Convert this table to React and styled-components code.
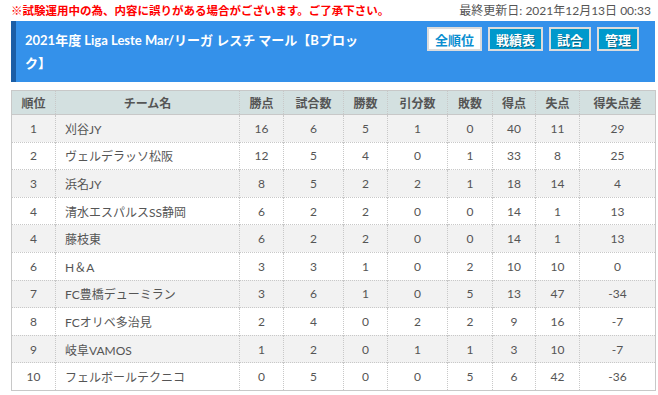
import styled, { createGlobalStyle } from "styled-components";

const GlobalStyle = createGlobalStyle`
  body {
    margin: 0;
    background: #fff;
    font-family: Lato, "Noto Sans CJK JP", sans-serif;
  }
`;

const columns = [
  { label: "順位", width: 44 },
  { label: "チーム名", width: 184 },
  { label: "勝点", width: 44 },
  { label: "試合数", width: 60 },
  { label: "勝数", width: 44 },
  { label: "引分数", width: 60 },
  { label: "敗数", width: 45 },
  { label: "得点", width: 43 },
  { label: "失点", width: 44 },
  { label: "得失点差", width: 76 },
];

const rows = [
  [1, "刈谷JY", 16, 6, 5, 1, 0, 40, 11, 29],
  [2, "ヴェルデラッソ松阪", 12, 5, 4, 0, 1, 33, 8, 25],
  [3, "浜名JY", 8, 5, 2, 2, 1, 18, 14, 4],
  [4, "清水エスパルスSS静岡", 6, 2, 2, 0, 0, 14, 1, 13],
  [4, "藤枝東", 6, 2, 2, 0, 0, 14, 1, 13],
  [6, "H＆A", 3, 3, 1, 0, 2, 10, 10, 0],
  [7, "FC豊橋デューミラン", 3, 6, 1, 0, 5, 13, 47, -34],
  [8, "FCオリベ多治見", 2, 4, 0, 2, 2, 9, 16, -7],
  [9, "岐阜VAMOS", 1, 2, 0, 1, 1, 3, 10, -7],
  [10, "フェルボールテクニコ", 0, 5, 0, 0, 5, 6, 42, -36],
];

const navButtons = [
  { label: "全順位", active: true },
  { label: "戦績表" },
  { label: "試合" },
  { label: "管理" },
];

const App = () => {
  return (
    <>
      <GlobalStyle />
      <S.Page>
        <S.TopLine>
          <S.Notice>※試験運用中の為、内容に誤りがある場合がございます。ご了承下さい。</S.Notice>
          <S.Updated>最終更新日: 2021年12月13日 00:33</S.Updated>
        </S.TopLine>

        <S.Banner>
          <S.Title>2021年度 Liga Leste Mar/リーガ レスチ マール【Bブロック】</S.Title>
          <S.Nav>
            {navButtons.map((b) => (
              <S.NavButton key={b.label} $active={b.active}>
                {b.label}
              </S.NavButton>
            ))}
          </S.Nav>
        </S.Banner>

        <S.Table>
          <colgroup>
            {columns.map((c) => (
              <col key={c.label} style={{ width: c.width }} />
            ))}
          </colgroup>
          <thead>
            <tr>
              {columns.map((c) => (
                <S.Th key={c.label}>{c.label}</S.Th>
              ))}
            </tr>
          </thead>
          <tbody>
            {rows.map((r, i) => (
              <S.Row key={i} $odd={i % 2 === 0}>
                {r.map((v, j) => (
                  <S.Td key={j} $name={j === 1}>
                    {v}
                  </S.Td>
                ))}
              </S.Row>
            ))}
          </tbody>
        </S.Table>
      </S.Page>
    </>
  );
};

export default App;

const S = {
  Page: styled.div`
    padding: 0 3px 0 11px;
    width: 658px;
    box-sizing: border-box;
  `,

  TopLine: styled.div`
    display: flex;
    justify-content: space-between;
    align-items: center;
    height: 21px;
    padding: 0 4px 2px 0;
    box-sizing: border-box;
    font-size: 12px;
  `,

  Notice: styled.div`
    color: #f00;
    font-weight: bold;
    font-family: "Noto Sans CJK JP", sans-serif;
    font-size: 11.5px;
  `,

  Updated: styled.div`
    color: #555;
    font-size: 12px;
  `,

  Banner: styled.div`
    display: flex;
    align-items: flex-start;
    background: #3491ea;
    border-left: 5px solid #1b5ea6;
    padding: 6px 16px 7px 9px;
    height: 61px;
    box-sizing: border-box;
  `,

  Title: styled.div`
    width: 352px;
    padding-top: 2px;
    color: #fff;
    font-weight: bold;
    font-size: 13px;
    line-height: 23px;
  `,

  Nav: styled.div`
    display: flex;
    gap: 6px;
    margin-left: auto;
  `,

  NavButton: styled.div`
    height: 24px;
    box-sizing: border-box;
    padding: 0 6px;
    display: flex;
    align-items: center;
    border: 2px solid #dcdcdc;
    background: ${(p) => (p.$active ? "#fff" : "#0099cc")};
    color: ${(p) => (p.$active ? "#0a8ed0" : "#fff")};
    font-family: "Noto Sans CJK JP", sans-serif;
    font-weight: bold;
    font-size: 13px;
    text-shadow: ${(p) => (p.$active ? "none" : "1px 1px 0 rgba(0,0,0,0.35)")};
  `,

  Table: styled.table`
    margin-top: 8px;
    width: 644px;
    table-layout: fixed;
    border-collapse: collapse;
    border: 1px solid #c8c8c8;
    font-size: 12px;
    color: #555;
  `,

  Th: styled.th`
    height: 23px;
    padding: 0;
    background: #d3e0e0;
    font-weight: bold;
    color: #555;
    text-align: center;
    border-left: 1px dotted #c8c8c8;
    border-bottom: 1px solid #c8c8c8;
  `,

  Row: styled.tr`
    height: 27.6px;
    background: ${(p) => (p.$odd ? "#f2f2f2" : "#fff")};
  `,

  Td: styled.td`
    padding: 0 ${(p) => (p.$name ? "9px" : "0")};
    text-align: ${(p) => (p.$name ? "left" : "center")};
    border-left: 1px dotted #c8c8c8;
    border-top: 1px dotted #c8c8c8;
    white-space: nowrap;
  `,
};
